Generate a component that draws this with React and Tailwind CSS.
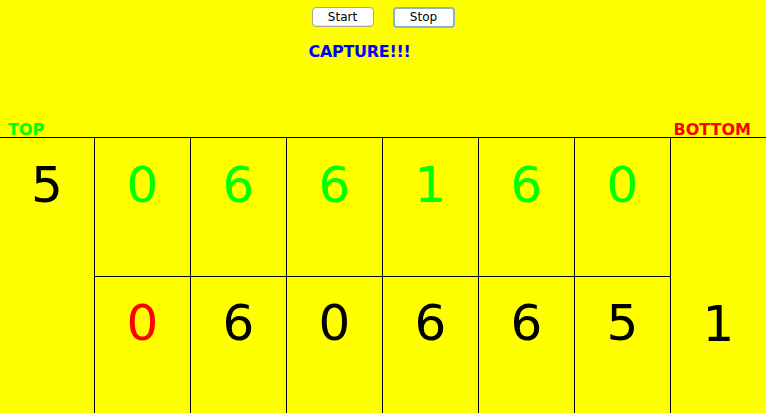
import React from 'react';

const topRow = ['0', '6', '6', '1', '6', '0'];
const bottomRow = [
  { v: '0', c: 'text-[#ff0000]' },
  { v: '6', c: 'text-black' },
  { v: '0', c: 'text-black' },
  { v: '6', c: 'text-black' },
  { v: '6', c: 'text-black' },
  { v: '5', c: 'text-black' },
];

const digit = "text-[50px] leading-[50px] text-center font-['DejaVu_Sans',sans-serif]";

export default function App() {
  return (
    <div className="h-[413px] w-full overflow-hidden bg-[#ffff00] font-['DejaVu_Sans',sans-serif]">
      {/* boutons + titre */}
      <div className="h-[122px]">
        <div className="mx-auto flex w-fit flex-col items-start pt-[7px]">
          <div className="flex gap-[19px]">
            <button className="h-[20px] w-[62px] rounded-[4px] border border-[#a8a890] bg-white text-[12px] leading-[18px] text-black shadow-[inset_0_-1px_0_#e4e4e4]">
              Start
            </button>
            <button className="h-[21px] w-[62px] rounded-[4px] border-2 border-[#88b4d0] bg-white text-[12px] leading-[17px] text-black">
              Stop
            </button>
          </div>
          <div className="-ml-[3px] mt-[14px] text-[16px] font-bold leading-[19px] tracking-[-0.3px] text-[#0000ff]">
            CAPTURE!!!
          </div>
        </div>
      </div>

      {/* libellés */}
      <div className="flex h-[15px] justify-between pl-[8px] pr-[15px] text-[16px] font-bold leading-[15px]">
        <span className="text-[#00ff00]">TOP</span>
        <span className="text-[#ff0000]">BOTTOM</span>
      </div>

      {/* grille */}
      <div className="grid grid-cols-[94px_repeat(6,96px)_1fr] grid-rows-[139px_140px] border-t border-black">
        <div className="row-span-2 pt-[22px]">
          <div className={`${digit} text-black`}>5</div>
        </div>
        {topRow.map((d, i) => (
          <div key={'t' + i} className="border-b border-l border-black pt-[22px]">
            <div className={`${digit} text-[#00ff00]`}>{d}</div>
          </div>
        ))}
        <div className="row-span-2 border-l border-black pt-[161px]">
          <div className={`${digit} text-black`}>1</div>
        </div>
        {bottomRow.map((d, i) => (
          <div key={'b' + i} className="border-l border-black pt-[21px]">
            <div className={`${digit} ${d.c}`}>{d.v}</div>
          </div>
        ))}
      </div>
    </div>
  );
}
